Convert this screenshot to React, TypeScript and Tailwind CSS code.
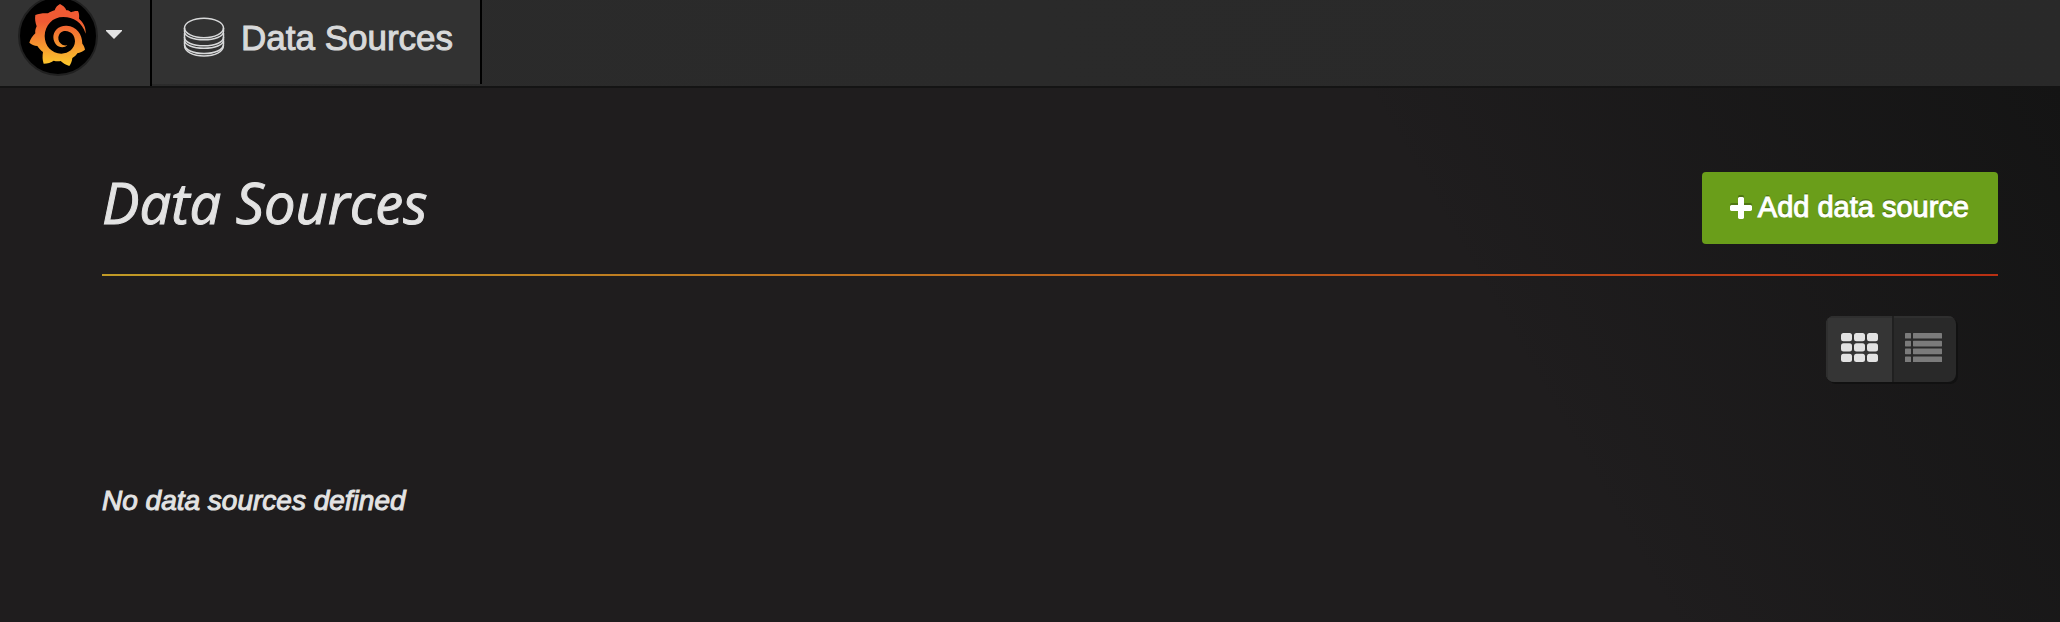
import { useState } from "react";

function LogoIcon() {
  return (
    <svg aria-hidden="true" viewBox="84 12 180 192" className="h-16 w-[60px] shrink-0">
      <defs>
        <linearGradient id="flame" gradientUnits="userSpaceOnUse" x1="0" y1="198" x2="0" y2="65">
          <stop offset="0" stopColor="#fcca2c" />
          <stop offset="1" stopColor="#f05a33" />
        </linearGradient>
      </defs>
      <path
        fill="url(#flame)"
        d="M257 101C258 80 250 68 237 56C238 48 238 40 234 33C226 32 219 34 213 37C208 32 203 31 199 31C196 22 188 16 180 12C172 16 167 22 164 31C158 32 150 36 144 40C132 39 118 40 106 45C104 57 106 68 110 79C106 87 105 93 106 100C98 108 91 117 88 128C94 133 103 137 112 138C117 145 122 151 129 156C127 168 127 180 131 191C143 191 153 188 161 182C168 184 176 184 182 183C189 190 198 195 208 198C213 191 216 183 217 174C223 171 228 166 232 160C240 158 248 155 255 149C254 142 251 136 247 131C247 103 230 78 200 77C175 76 160 93 160 112C161 130 172 142 187 142C193 142 198 140 202 136C196 137 191 136 187 134C179 130 174 122 175 112C177 100 184 93 196 93C214 94 225 106 225 124C224 146 206 161 184 161C155 160 134 138 134 108C135 75 158 51 190 51C220 51 246 66 257 101Z"
      />
    </svg>
  );
}

function DatabaseIcon() {
  return (
    <svg aria-hidden="true" viewBox="0 0 42 40" className="h-10 w-[42px] shrink-0" fill="none" stroke="#d8d9da">
      <g strokeWidth="1.5">
        <ellipse cx="21" cy="11" rx="19.5" ry="9.7" />
        <path d="M1.5 11v3.5c0 5 8.7 8.300 19.500 8.300s19.500-3.300 19.500-8.300V11" />
        <path d="M1.500 16v4c0 5.500 8.700 8.800 19.500 8.800s19.500-3.300 19.500-8.800v-4" />
        <path d="M1.500 20v3c0 5 8.700 8.300 19.500 8.300s19.500-3.300 19.500-8.300v-3" />
        <path d="M1.500 24v3c0 6 8.700 9.500 19.500 9.500s19.500-3.500 19.500-9.500v-3" />
        <path d="M1.500 28c0 7 8.700 11 19.500 11s19.500-4 19.500-11" />
      </g>
    </svg>
  );
}

function PlusIcon() {
  return (
    <svg aria-hidden="true" viewBox="192 128 1408 1408" className="size-[22px] shrink-0 drop-shadow-[0_-2px_0_rgba(0,0,0,0.25)]" fill="currentColor">
      <path d="M1600 736v192q0 40-28 68t-68 28h-416v416q0 40-28 68t-68 28h-192q-40 0-68-28t-28-68v-416h-416q-40 0-68-28t-28-68v-192q0-40 28-68t68-28h416v-416q0-40 28-68t68-28h192q40 0 68 28t28 68v416h416q40 0 68 28t28 68z" />
    </svg>
  );
}

function GridIcon() {
  return (
    <svg aria-hidden="true" viewBox="0 0 37 29" className="h-[29px] w-[37px]" fill="currentColor">
      {[0, 10.3, 20.7].map((y) =>
        [0, 13, 26].map((x) => <rect key={`${x}-${y}`} x={x} y={y} width="11" height="8.300" rx="2.500" />),
      )}
    </svg>
  );
}

function ListIcon() {
  return (
    <svg aria-hidden="true" viewBox="0 0 37 29" className="h-[29px] w-[37px]" fill="currentColor">
      {[0, 7.8, 15.6, 23.4].map((y) => (
        <g key={y}>
          <rect x="0" y={y} width="6" height="5.600" rx="0.600" />
          <rect x="8" y={y} width="29" height="5.600" rx="0.600" />
        </g>
      ))}
    </svg>
  );
}

export default function App() {
  const [view, setView] = useState<"grid" | "list">("grid");

  return (
    <div className="min-h-screen bg-[#1f1d1e] bg-[linear-gradient(60deg,transparent_69%,#141414_98%)] font-['Liberation_Sans',Arial,sans-serif] text-[#e3e3e3] [-webkit-text-stroke:1px_currentColor]">
      <header className="flex h-[88px] items-stretch border-b-2 border-[#141414] bg-linear-to-r from-[#2b2b2b] to-[#292929]">
        <button type="button" aria-label="Main menu" className="flex w-[152px] items-start gap-2 border-r-2 border-black bg-[#323232] pl-[18px]">
          <span className="-mt-1 flex size-20 shrink-0 items-center justify-center rounded-full border-2 border-[#202020] bg-black">
            <LogoIcon />
          </span>
          <svg aria-hidden="true" viewBox="0 0 16 9" className="mt-[30px] h-[9px] w-4" fill="#e3e3e3">
            <path d="M0 0h16v1l-8 8-8-8z" />
          </svg>
        </button>
        <a href="#" className="mb-0.5 flex items-start gap-4 border-r-2 border-black bg-[#323232] pt-[17px] pr-[27px] pl-[31px] text-[35px] leading-[42px] text-[#d8d9da]">
          <DatabaseIcon />
          Data Sources
        </a>
      </header>

      <main className="pt-[84px] pr-[62px] pl-[102px]">
        <div className="flex h-[104px] items-start justify-between border-b-2 [border-image:linear-gradient(to_right,#c09a26,#b93013)_1]">
          <h1 className="font-['Open_Sans',sans-serif] text-[56px] leading-[60px] italic">Data Sources</h1>
          <button type="button" className="flex h-[72px] items-center gap-1.5 rounded-[4px] bg-[#6a9e1a] pr-[29px] pl-7 text-[29px] text-white [text-shadow:0_-2px_0_rgba(0,0,0,0.25)]">
            <PlusIcon />
            Add data source
          </button>
        </div>

        <div className="mt-10 mr-[42px] flex justify-end">
          <div className="flex h-[66px] overflow-hidden rounded-[8px] bg-[#292929] shadow-[2px_2px_0_#111111]">
            <button
              type="button"
              aria-label="Grid view"
              aria-pressed={view === "grid"}
              onClick={() => setView("grid")}
              className="flex w-[68px] items-center justify-center border-r-2 border-[#202020] bg-[#353535] pb-[3px] text-[#e3e3e3] shadow-[inset_2px_2px_0_#2f2f2f]"
            >
              <GridIcon />
            </button>
            <button
              type="button"
              aria-label="List view"
              aria-pressed={view === "list"}
              onClick={() => setView("list")}
              className="flex w-[62px] items-center justify-center pr-[3px] pb-[3px] text-[#7b7b7b] shadow-[inset_0_2px_0_#2f2f2f]"
            >
              <ListIcon />
            </button>
          </div>
        </div>

        <p className="pt-[101px] text-[28px] leading-9 italic">No data sources defined</p>
      </main>
    </div>
  );
}
